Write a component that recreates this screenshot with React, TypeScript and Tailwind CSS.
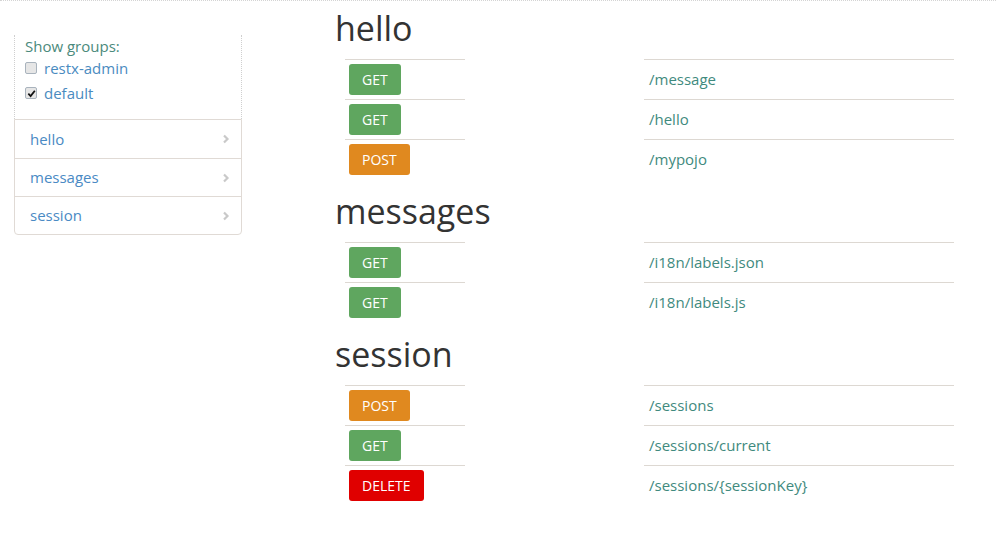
import { ReactNode } from 'react';

type Method = 'GET' | 'POST' | 'DELETE';

interface Endpoint {
    method: Method;
    path: string;
}

interface Group {
    name: string;
    endpoints: Endpoint[];
}

const groups: Group[] = [
    {
        name: 'hello',
        endpoints: [
            { method: 'GET', path: '/message' },
            { method: 'GET', path: '/hello' },
            { method: 'POST', path: '/mypojo' },
        ],
    },
    {
        name: 'messages',
        endpoints: [
            { method: 'GET', path: '/i18n/labels.json' },
            { method: 'GET', path: '/i18n/labels.js' },
        ],
    },
    {
        name: 'session',
        endpoints: [
            { method: 'POST', path: '/sessions' },
            { method: 'GET', path: '/sessions/current' },
            { method: 'DELETE', path: '/sessions/{sessionKey}' },
        ],
    },
];

const methodClass: Record<Method, string> = {
    GET: 'bg-[#5fa65f]',
    POST: 'bg-[#e0891f]',
    DELETE: 'bg-[#e00000]',
};

function Checkbox({ checked }: { checked: boolean }) {
    return (
        <span className="w-[12px] h-[12px] border border-[#a9b3bd] bg-[#e6e6e6] rounded-[2px] flex items-center justify-center shrink-0">
            {checked && (
                <svg width="9" height="9" viewBox="0 0 10 10">
                    <path d="M1.5 5.2 L4 7.8 L8.7 2" stroke="#111" strokeWidth="2" fill="none" />
                </svg>
            )}
        </span>
    );
}

function Chevron() {
    return (
        <svg width="8" height="10" viewBox="0 0 8 10" className="text-[#c9c9c9]">
            <path d="M2 1.5 L5.5 5 L2 8.5" stroke="currentColor" strokeWidth="2.2" fill="none" />
        </svg>
    );
}

function Row({ children, path }: { children: ReactNode; path: string }) {
    return (
        <div className="grid grid-cols-[120px_179px_310px] h-[40px]">
            <div className="border-t border-[#ddd8d2] pt-[4px] pl-[4px]">{children}</div>
            <div />
            <div className="border-t border-[#ddd8d2] pl-[5px] flex items-center text-[15px] text-[#3f8a7e]">
                {path}
            </div>
        </div>
    );
}

export default function App() {
    return (
        <div className="w-[996px] h-[536px] bg-white border-t border-dotted border-[#d4d4d4] flex font-['Open_Sans',sans-serif]">
            <aside className="w-[228px] ml-[14px] mt-[34px] shrink-0">
                <div className="border-x border-dotted border-[#cfcfcf] pl-[10px] pt-[1px] pb-[13px] text-[15px] text-[#4b8a7c]">
                    <div className="leading-[20px]">Show groups:</div>
                    <label className="flex items-center gap-[7px] h-[24px]">
                        <Checkbox checked={false} />
                        <span className="text-[#4a8bbf]">restx-admin</span>
                    </label>
                    <label className="flex items-center gap-[7px] h-[26px]">
                        <Checkbox checked={true} />
                        <span className="text-[#4a8bbf]">default</span>
                    </label>
                </div>
                <nav className="border border-[#e0dad5] rounded-b-[4px]">
                    {groups.map((group, i) => (
                        <div
                            key={group.name}
                            className={`h-[38px] flex items-center justify-between pl-[15px] pr-[11px] text-[15px] text-[#4a8ac4] ${i > 0 ? 'border-t border-[#e0dad5]' : ''}`}
                        >
                            <span>{group.name}</span>
                            <Chevron />
                        </div>
                    ))}
                </nav>
            </aside>

            <main className="ml-[93px] flex-1">
                {groups.map((group, gi) => (
                    <section key={group.name}>
                        <h1 className={`text-[34px] leading-[40px] text-[#333] font-normal pb-[11px] ${gi === 0 ? 'pt-[7px]' : 'pt-[12px]'}`}>
                            {group.name}
                        </h1>
                        <div className="ml-[10px]">
                            {group.endpoints.map(ep => (
                                <Row key={ep.method + ep.path} path={ep.path}>
                                    <span className={`inline-flex items-center h-[31px] px-[13px] rounded-[3px] text-white text-[14px] ${methodClass[ep.method]}`}>
                                        {ep.method}
                                    </span>
                                </Row>
                            ))}
                        </div>
                    </section>
                ))}
            </main>
        </div>
    );
}
